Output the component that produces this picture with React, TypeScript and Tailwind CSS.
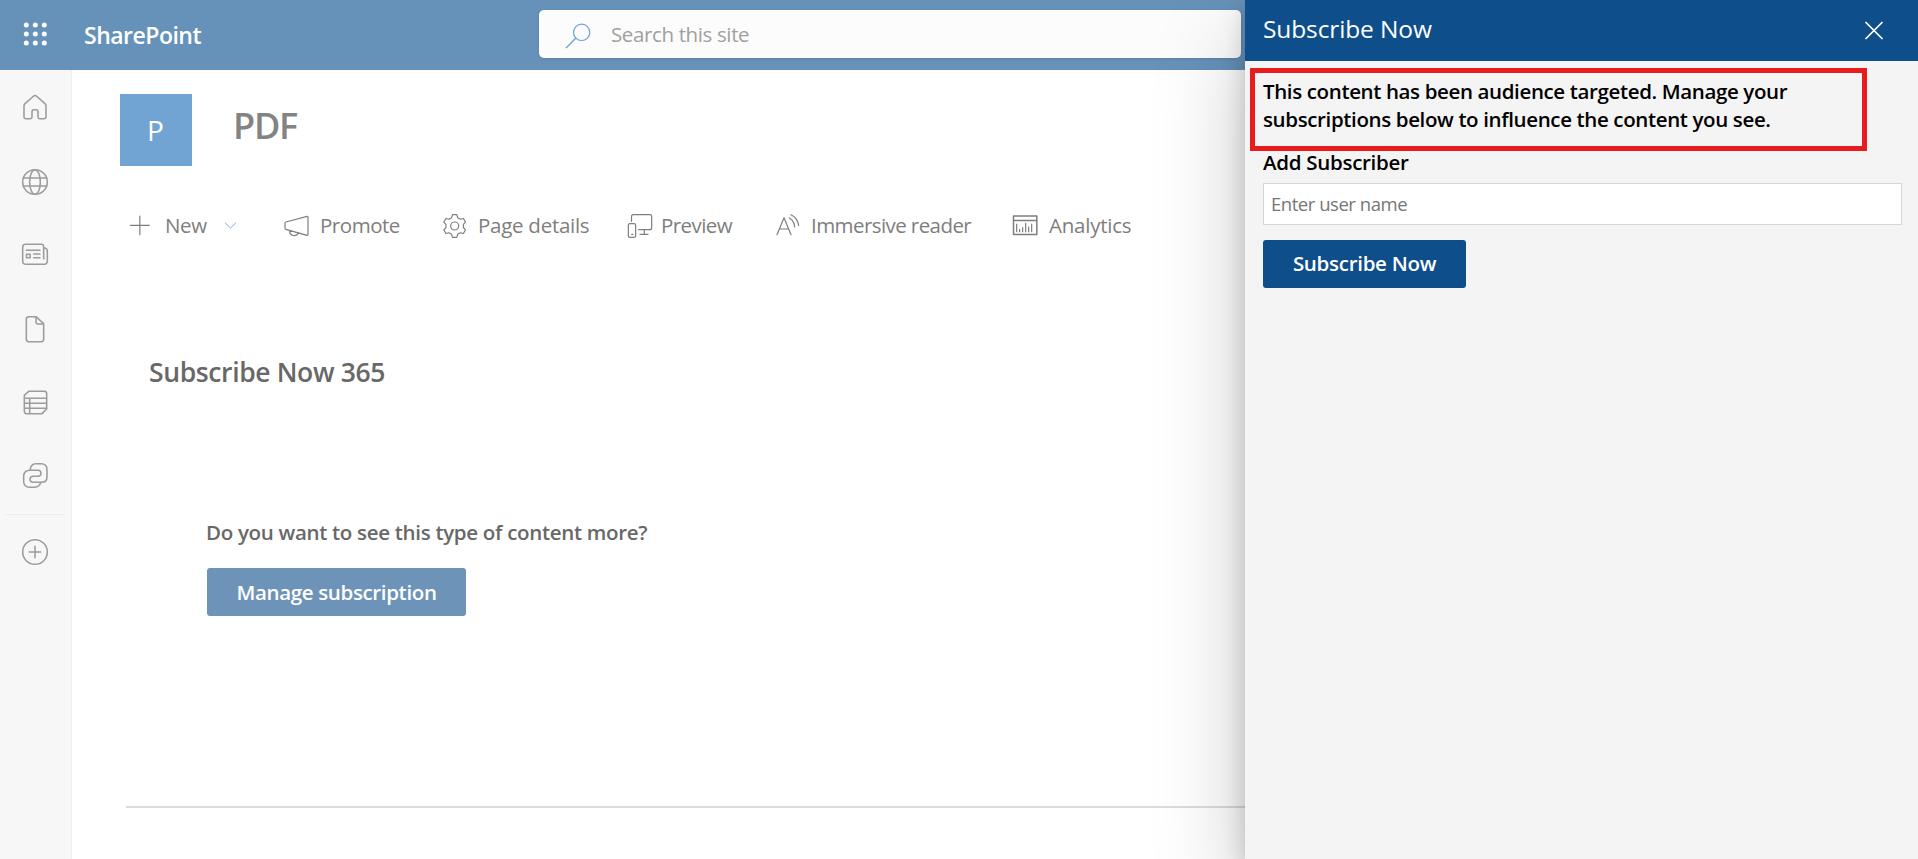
import type { ReactNode } from "react";

type IconProps = { viewBox: string; className?: string; width?: number; children: ReactNode };

function Icon({ viewBox, className = "", width = 3.6, children }: IconProps) {
  return (
    <svg
      viewBox={viewBox}
      className={`shrink-0 overflow-visible ${className}`}
      fill="none"
      stroke="currentColor"
      strokeWidth={width}
      strokeLinecap="round"
      strokeLinejoin="round"
      aria-hidden="true"
    >
      {children}
    </svg>
  );
}

function RailIcon({ viewBox, children }: { viewBox: string; children: ReactNode }) {
  return (
    <a className="flex h-[74px] items-center pl-[19px] text-[#9c9c9c]">
      <Icon viewBox={viewBox} className="size-8" width={4.7}>
        {children}
      </Icon>
    </a>
  );
}

function gearPath() {
  const tooth = [
    [-9, -25],
    [-6.5, -34],
    [6.5, -34],
    [9, -25],
  ];
  const points: string[] = [];
  for (let i = 0; i < 6; i++) {
    const a = (i * Math.PI) / 3;
    for (const [x, y] of tooth) {
      const px = 1034 + x * Math.cos(a) - y * Math.sin(a);
      const py = 108 + x * Math.sin(a) + y * Math.cos(a);
      points.push(`${px.toFixed(1)} ${py.toFixed(1)}`);
    }
  }
  return `M${points.join("L")}Z`;
}

function Sidebar() {
  return (
    <nav className="flex w-[72px] shrink-0 flex-col border-r border-[#ededed] bg-[#f7f7f7]">
      <RailIcon viewBox="57 273 96 96">
        <path d="M101 288L75 311Q72 314 72 318V350Q72 356 78 356H91Q96 356 96 351V335Q96 329 102 329H108Q114 329 114 335V351Q114 356 119 356H131Q138 356 138 350V318Q138 314 135 311L109 288Q105 285 101 288Z" />
      </RailIcon>
      <RailIcon viewBox="57 495 96 96">
        <circle cx="105" cy="546" r="37" />
        <ellipse cx="105" cy="546" rx="16" ry="37" />
        <path d="M70 534H140M70 558H140" />
      </RailIcon>
      <RailIcon viewBox="57 717 96 96">
        <path d="M76 733H124Q131 733 131 741V777M131 743Q142 744 142 753V782Q142 793 131 793H78Q68 793 68 783V742Q68 733 77 733" />
        <path d="M79 751H120M101 762H120M101 773H120M79.500 762.500H90.500V773.500H79.500Z" />
      </RailIcon>
      <RailIcon viewBox="57 99 96 96">
        <path d="M86 110H108L131 131V178Q131 185 124 185H86Q79 185 79 178V117Q79 110 86 110ZM108 110V127Q108 132 113 132H131" />
      </RailIcon>
      <RailIcon viewBox="57 321 96 96">
        <path d="M86 334H133Q140 334 140 341V387L126 401H80Q73 401 73 394V346ZM73 355H140M73 370H140M73 385H140M89 355V401" />
      </RailIcon>
      <RailIcon viewBox="57 543 96 96">
        <path d="M90 571Q92 551 108 551H123Q141 551 141 569V590Q141 607 124 607H100Q90 607 90 598Q90 589 100 589H114Q123 589 123 580Q123 571 114 571H90Q71 571 71 590V604Q71 622 89 622H103Q117 622 123 607" />
      </RailIcon>
      <div className="mx-1.5 h-px bg-[#ededed]" />
      <RailIcon viewBox="57 768 96 96">
        <circle cx="105" cy="816" r="37" />
        <path d="M88 816H122M105 799V833" />
      </RailIcon>
    </nav>
  );
}

function Command({ icon, label, className }: { icon: ReactNode; label: string; className: string }) {
  return (
    <button className={`flex shrink-0 items-center whitespace-nowrap ${className}`}>
      {icon}
      <span>{label}</span>
    </button>
  );
}

function Toolbar() {
  return (
    <div className="mt-[39px] ml-[54px] flex h-10 items-center text-[20.5px] text-[#7e7e7e]">
      <button className="flex w-[157px] shrink-0 items-center tracking-[-0.018em]">
        <Icon viewBox="48 63 84 84" className="size-7">
          <path d="M61 106H118M89.500 78V134" />
        </Icon>
        <span className="ml-[11px]">New</span>
        <Icon viewBox="342 93 42 24" className="ml-auto mr-[45px] h-2 w-3.5 text-[#7faade]">
          <path d="M346 99L361.500 114L377 99" strokeWidth="3" />
        </Icon>
      </button>
      <Command
        className="w-[158px] gap-[9px] tracking-[-0.023em]"
        label="Promote"
        icon={
          <Icon viewBox="519 63 84 84" className="size-7">
            <path d="M528 96L591 79Q594 79 594 82V133Q594 136 591 136L528 118Q525 117 525 114V100Q525 97 528 96ZM539 121C538 140 560 141 565 128" />
          </Icon>
        }
      />
      <Command
        className="w-[185px] gap-[9px] tracking-[-0.013em]"
        label="Page details"
        icon={
          <Icon viewBox="993 63 84 84" className="size-7">
            <path d={gearPath()} />
            <circle cx="1034" cy="108" r="12" />
          </Icon>
        }
      />
      <Command
        className="w-[148px] gap-[7px] tracking-[-0.027em]"
        label="Preview"
        icon={
          <Icon viewBox="48 63 84 84" className="size-7">
            <path d="M64.500 94V80Q64.500 74 70 74H119Q125 74 125 80V113Q125 119 119 119H86M103 119V132M90 133H114M65 133H69" />
            <rect x="55" y="101" width="22" height="41" rx="5" />
          </Icon>
        }
      />
      <Command
        className="w-[236px] gap-[9px] tracking-[-0.028em]"
        label="Immersive reader"
        icon={
          <Icon viewBox="492 63 84 84" className="size-7">
            <path d="M501 134L522 83L543 134M508 117H536M538 84Q553 92 554 111M543 74Q563 84 566 106" />
          </Icon>
        }
      />
      <Command
        className="gap-[11px] tracking-[-0.011em]"
        label="Analytics"
        icon={
          <Icon viewBox="1200 63 84 84" className="size-7">
            <path d="M1210.500 78H1280.500V133.500H1210.500ZM1211 91.500H1280" strokeWidth="4.500" />
            <path d="M1220 102V125M1229 118V125M1238 113V125M1247 100V125M1256 111V125M1265 102V125" />
          </Icon>
        }
      />
    </div>
  );
}

function Panel() {
  return (
    <aside className="absolute inset-y-0 right-0 flex w-[673px] flex-col bg-[#f4f4f4] text-black shadow-[0_38px_86px_0_rgba(0,0,0,0.22),0_7px_22px_0_rgba(0,0,0,0.18)]">
      <header className="flex h-[61px] items-start justify-between bg-[#0e4e8a] pl-[18px] pr-[34px] text-white">
        <h2 className="text-[24.5px] leading-[57px] tracking-[-0.005em]">Subscribe Now</h2>
        <svg viewBox="0 0 20 20" className="mt-5 size-5" stroke="currentColor" strokeWidth="1.700" aria-hidden="true">
          <path d="M1.500 2L18.500 19M18.500 2L1.500 19" />
        </svg>
      </header>
      <div className="flex flex-col items-start pl-[18px] pr-4 pt-4">
        <div className="relative text-[20.5px] font-semibold leading-7">
          <div className="absolute -left-[13px] -top-[9px] h-[83px] w-[617px] border-[5px] border-[#e81c1c]" />
          <p className="whitespace-nowrap tracking-[-0.018em]">
            This content has been audience targeted. Manage your
            <br />
            subscriptions below to influence the content you see.
          </p>
        </div>
        <label className="mt-[15px] text-[20.5px] font-semibold leading-7 tracking-[-0.014em]">Add Subscriber</label>
        <input
          className="mt-[7px] h-[42px] w-full border border-[#d6d6d6] bg-white pb-0.5 pl-[7px] pr-2 text-[18.5px] tracking-[-0.025em] placeholder:text-[#767676]"
          placeholder="Enter user name"
        />
        <button className="mt-[15px] h-12 w-[203px] rounded-[3px] bg-[#0e4e8a] pb-px text-[20.5px] font-semibold tracking-[-0.014em] text-white">
          Subscribe Now
        </button>
      </div>
    </aside>
  );
}

export default function App() {
  return (
    <div className="relative flex h-[859px] w-[1918px] flex-col overflow-hidden bg-white font-['Open_Sans','Noto_Sans',sans-serif]">
      <header className="flex h-[70px] shrink-0 items-center bg-[#6692b9] text-white">
        <svg viewBox="0 0 24 24" className="mb-[3px] ml-[23px] size-6" fill="currentColor" aria-hidden="true">
          {[3, 12, 21].map((y) => [3, 12, 21].map((x) => <circle key={`${x}-${y}`} cx={x + 0.3} cy={y} r="2.500" />))}
        </svg>
        <span className="ml-[37px] w-[455px] text-[23px] font-semibold tracking-[-0.022em]">SharePoint</span>
        <div className="mb-0.5 flex h-12 w-[702px] items-center rounded-[5px] bg-[#fcfcfc] pl-[25px] shadow-[0_1px_3px_rgba(0,0,0,0.12)]">
          <Icon viewBox="132 60 84 84" className="size-7 text-[#6aa2da]">
            <circle cx="185" cy="97" r="24.500" />
            <path d="M167 115L139 143" strokeWidth="4" />
          </Icon>
          <span className="ml-[19px] pt-px text-[20.5px] tracking-[-0.018em] text-[#a0a0a0]">Search this site</span>
        </div>
      </header>
      <div className="flex min-h-0 flex-1">
        <Sidebar />
        <main className="flex flex-1 flex-col text-[#686868]">
          <div className="mt-6 ml-12 flex h-[72px] shrink-0">
            <div className="flex size-[72px] items-center justify-center bg-[#71a3d3] pr-px text-[28px] text-white">P</div>
            <h1 className="ml-[41px] text-[36px] font-semibold leading-[64px] tracking-[-0.034em] text-[#838383]">PDF</h1>
          </div>
          <Toolbar />
          <h2 className="mt-[107px] ml-[77px] text-[26.500px] font-semibold leading-10 tracking-[-0.014em]">Subscribe Now 365</h2>
          <p className="mt-[125px] ml-[134px] text-[20.5px] font-semibold leading-[30px] tracking-[-0.015em]">
            Do you want to see this type of content more?
          </p>
          <button className="mt-[21px] ml-[135px] h-12 w-[259px] shrink-0 rounded-[3px] bg-[#6e93b9] text-[20.5px] font-semibold tracking-[-0.017em] text-white">
            Manage subscription
          </button>
          <div className="mt-[190px] ml-[54px] h-0.5 bg-[#dcdcdc]" />
        </main>
      </div>
      <Panel />
    </div>
  );
}
